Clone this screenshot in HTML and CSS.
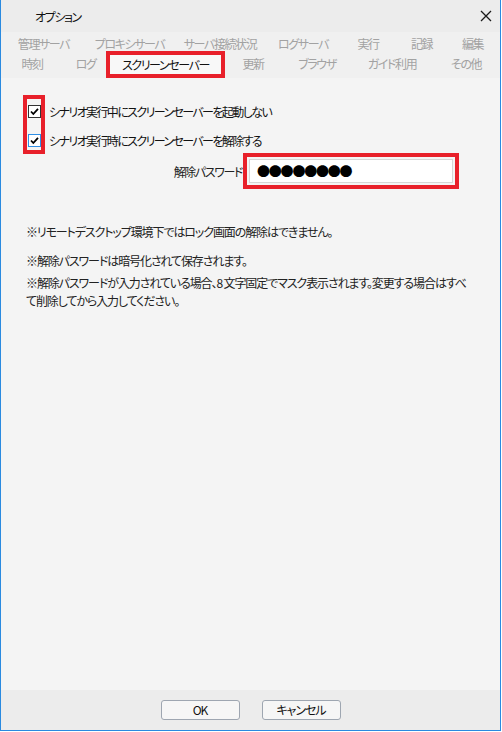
FILE: index.html
```html
<!DOCTYPE html>
<html lang="ja">
<head>
<meta charset="utf-8">
<link rel="stylesheet" href="styles.css">
</head>
<body>
<div class="window">
  <div class="titlebar">
    <span class="title">オプション</span>
    <svg class="close" width="12" height="12" viewBox="0 0 12 12"><path d="M1 1 L11 11 M11 1 L1 11" stroke="#1b1b1b" stroke-width="1.3" fill="none"/></svg>
  </div>
  <div class="tabs">
    <div class="tabrow r1">
      <div class="tab">管理サーバ</div>
      <div class="tab">プロキシサーバ</div>
      <div class="tab">サーバ接続状況</div>
      <div class="tab">ログサーバ</div>
      <div class="tab">実行</div>
      <div class="tab">記録</div>
      <div class="tab">編集</div>
    </div>
    <div class="tabrow r2">
      <div class="tab">時刻</div>
      <div class="tab">ログ</div>
      <div class="tab sel">スクリーンセーバー</div>
      <div class="tab">更新</div>
      <div class="tab">ブラウザ</div>
      <div class="tab">ガイド利用</div>
      <div class="tab">その他</div>
    </div>
  </div>
  <div class="content">
    <div class="checks">
      <div class="cbcol">
        <span class="cb"><svg width="11" height="11" viewBox="0 0 11 11"><path d="M2 5.5 L4.3 8 L9 2.8" stroke="#000" stroke-width="1.8" fill="none"/></svg></span>
        <span class="cb focus"><svg width="11" height="11" viewBox="0 0 11 11"><path d="M2 5.5 L4.3 8 L9 2.8" stroke="#000" stroke-width="1.8" fill="none"/></svg></span>
      </div>
      <div class="lblcol">
        <div class="lbl">シナリオ実行中にスクリーンセーバーを起動しない</div>
        <div class="lbl">シナリオ実行時にスクリーンセーバーを解除する</div>
      </div>
    </div>
    <div class="pwrow">
      <div class="pwlabel">解除パスワード</div>
      <div class="pwbox">
        <div class="pwinput">●●●●●●●●</div>
      </div>
    </div>
    <div class="notes">
      <p class="note n1">※リモートデスクトップ環境下ではロック画面の解除はできません。</p>
      <p class="note n2">※解除パスワードは暗号化されて保存されます。</p>
      <p class="note n3">※解除パスワードが入力されている場合、8 文字固定でマスク表示されます。変更する場合はすべ<br>て削除してから入力してください。</p>
    </div>
  </div>
  <div class="footer">
    <button class="btn">OK</button>
    <button class="btn">キャンセル</button>
  </div>
</div>
</body>
</html>
```

FILE: styles.css
```css
html, body {
  margin: 0;
  padding: 0;
  background: #ffffff;
}
body {
  font-family: "Noto Sans CJK JP", "Noto Sans", sans-serif;
  font-size: 12px;
  color: #1a1a1a;
  font-feature-settings: "palt";
  letter-spacing: -1.4px;
}
.window {
  width: 501px;
  height: 731px;
  box-sizing: border-box;
  border-left: 1px solid #2a8ae0;
  border-right: 1px solid #2a8ae0;
  border-bottom: 1px solid #2a8ae0;
  display: flex;
  flex-direction: column;
  background: #f4f4f4;
}
.titlebar {
  height: 32px;
  flex: none;
  background: #ececec;
  display: flex;
  align-items: center;
  justify-content: space-between;
  padding: 0 8px 0 34px;
}
.title {
  font-size: 12px;
  color: #111;
}
.close {
  display: block;
}
.tabs {
  height: 46px;
  flex: none;
  background: #f0f0f0;
  padding: 2px 1px 0 1px;
  box-sizing: border-box;
}
.tabrow {
  display: flex;
}
.tab {
  color: #a2a2a2;
  text-align: center;
  height: 20px;
  line-height: 20px;
  white-space: nowrap;
  box-sizing: border-box;
}
.r1 .tab:nth-child(1) { width: 83px; }
.r1 .tab:nth-child(2) { width: 89px; }
.r1 .tab:nth-child(3) { width: 92px; }
.r1 .tab:nth-child(4) { width: 74px; }
.r1 .tab:nth-child(5) { width: 56px; }
.r1 .tab:nth-child(6) { width: 51px; }
.r1 .tab:nth-child(7) { width: 51px; }
.r2 {
  height: 24px;
}
.r2 .tab:nth-child(1) { width: 60px; }
.r2 .tab:nth-child(2) { width: 47px; }
.r2 .tab:nth-child(3) { width: 113px; }
.r2 .tab:nth-child(4) { width: 62px; }
.r2 .tab:nth-child(5) { width: 66px; }
.r2 .tab:nth-child(6) { width: 84px; }
.r2 .tab:nth-child(7) { width: 64px; }
.r2 .tab.sel {
  width: 119px;
  margin: -3px -3px 0 -3px;
  height: 27px;
  line-height: 19px;
  border: 4px solid #e8202a;
  background: #f8f8f8;
  color: #111;
  position: relative;
}
.content {
  flex: 1;
  padding: 17px 0 0 22px;
}
.checks {
  display: flex;
}
.cbcol {
  border: 4px solid #e8202a;
  width: 22px;
  height: 59px;
  box-sizing: border-box;
  display: flex;
  flex-direction: column;
  align-items: center;
  padding-top: 6px;
  gap: 16px;
}
.cb {
  width: 13px;
  height: 13px;
  box-sizing: border-box;
  border: 1px solid #333;
  background: #fff;
  display: flex;
  align-items: center;
  justify-content: center;
}
.cb.focus {
  border-color: #2f8fe6;
}
.lblcol {
  margin-left: 4px;
  padding-top: 2px;
  letter-spacing: -1.6px;
}
.lbl {
  height: 29px;
  line-height: 29px;
  color: #111;
}
.pwrow {
  display: flex;
  align-items: center;
  margin-top: -2px;
}
.pwlabel {
  width: 220px;
  text-align: right;
  color: #222;
  padding-right: 1px;
  box-sizing: border-box;
}
.pwbox {
  width: 216px;
  height: 36px;
  box-sizing: border-box;
  border: 4px solid #e8202a;
  padding: 2px;
}
.pwinput {
  height: 24px;
  box-sizing: border-box;
  border: 1px solid #d6d6d6;
  background: #fff;
  font-size: 13px;
  line-height: 22px;
  padding-left: 7px;
  color: #000;
  letter-spacing: -1.2px;
}
.notes {
  margin-top: 34px;
  padding-left: 3px;
  letter-spacing: -1.1px;
}
.note {
  margin: 0;
  line-height: 18px;
  color: #222;
  width: 480px;
}
.n2 {
  margin-top: 11px;
}
.n3 {
  margin-top: 4px;
}
.footer {
  height: 40px;
  flex: none;
  background: #ececec;
  display: flex;
  justify-content: center;
  align-items: flex-start;
  padding-top: 10px;
  box-sizing: border-box;
  gap: 22px;
}
.btn {
  width: 79px;
  height: 20px;
  margin: 0;
  padding: 0;
  border: 1px solid #9ea6b1;
  border-radius: 3px;
  background: #f6f6f6;
  font-family: "Noto Sans CJK JP", "Noto Sans", sans-serif;
  font-feature-settings: "palt";
  letter-spacing: -1px;
  font-size: 12px;
  color: #111;
  line-height: 18px;
}
```
